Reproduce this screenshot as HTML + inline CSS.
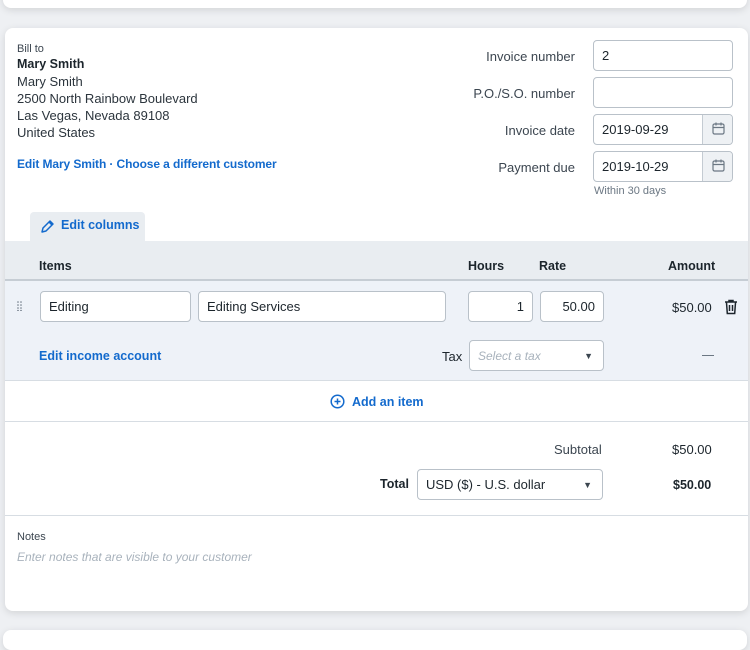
<!DOCTYPE html>
<html><head><style>
*{box-sizing:border-box;margin:0;padding:0}
body{width:750px;height:636px;background:#eef0f3;font-family:"Liberation Sans",sans-serif;color:#1c252c;position:relative;overflow:hidden;font-size:13px}
.a{position:absolute;white-space:nowrap}
.card{position:absolute;background:#fff;border-radius:8px;box-shadow:0 2px 8px rgba(0,0,0,.12)}
.in{position:absolute;border:1px solid #b9c1c9;border-radius:4px;background:#fff;font-size:13px;padding-left:8px;display:flex;align-items:center;color:#1c252c}
.lbl{position:absolute;text-align:right;font-size:13px;color:#3c4650;width:200px}
.blue{color:#136acd;font-weight:bold;font-size:12.5px}
.b{font-weight:bold;font-size:12.5px}
.cal{position:absolute;right:0;top:0;bottom:0;width:30px;background:#eef1f4;border-left:1px solid #c4cbd2;border-radius:0 4px 4px 0}
</style></head><body>
<div class="card" style="left:3px;top:-10px;width:744px;height:18px;border-radius:0 0 8px 8px"></div>
<div class="card" style="left:5px;top:28px;width:743px;height:583px;overflow:hidden">
 <div class="a" style="left:12px;top:15px;font-size:11px;color:#3c4650">Bill to</div>
 <div class="a b" style="left:12px;top:29px">Mary Smith</div>
 <div class="a" style="left:12px;top:45px;line-height:17px;color:#2c353d">Mary Smith<br>2500 North Rainbow Boulevard<br>Las Vegas, Nevada 89108<br>United States</div>
 <div class="a blue" style="left:12px;top:129px;font-size:12px;letter-spacing:-0.1px">Edit Mary Smith · Choose a different customer</div>

 <div class="lbl" style="left:370px;top:21px">Invoice number</div>
 <div class="in" style="left:588px;top:12px;width:140px;height:31px">2</div>
 <div class="lbl" style="left:370px;top:58px">P.O./S.O. number</div>
 <div class="in" style="left:588px;top:49px;width:140px;height:31px"></div>
 <div class="lbl" style="left:370px;top:95px">Invoice date</div>
 <div class="in" style="left:588px;top:86px;width:140px;height:31px">2019-09-29<div class="cal"><svg width="30" height="29" viewBox="0 0 30 29"><rect x="10" y="9" width="11" height="10" rx="1.5" fill="none" stroke="#6b7783" stroke-width="1.2"/><path d="M10 12.5h11M13 7.5v3M18 7.5v3" stroke="#6b7783" stroke-width="1.2"/></svg></div></div>
 <div class="lbl" style="left:370px;top:132px">Payment due</div>
 <div class="in" style="left:588px;top:123px;width:140px;height:31px">2019-10-29<div class="cal"><svg width="30" height="29" viewBox="0 0 30 29"><rect x="10" y="9" width="11" height="10" rx="1.5" fill="none" stroke="#6b7783" stroke-width="1.2"/><path d="M10 12.5h11M13 7.5v3M18 7.5v3" stroke="#6b7783" stroke-width="1.2"/></svg></div></div>
 <div class="a" style="left:589px;top:157px;font-size:11px;color:#6b7783">Within 30 days</div>

 <div class="a" style="left:25px;top:184px;width:115px;height:30px;background:#e9edf1;border-radius:4px 4px 0 0"></div>
 <svg class="a" style="left:35px;top:191px" width="15" height="15" viewBox="0 0 15 15"><path d="M2 13l1-4 7-7 3 3-7 7z M9 3l3 3" fill="none" stroke="#136acd" stroke-width="1.5" stroke-linejoin="round"/></svg>
 <div class="a blue" style="left:56px;top:190px">Edit columns</div>

 <div class="a" style="left:0;top:213px;width:743px;height:40px;background:#e9edf1;border-bottom:2px solid #c6cdd4"></div>
 <div class="a b" style="left:34px;top:231px">Items</div>
 <div class="a b" style="left:463px;top:231px">Hours</div>
 <div class="a b" style="left:534px;top:231px">Rate</div>
 <div class="a b" style="left:663px;top:231px">Amount</div>

 <div class="a" style="left:0;top:253px;width:743px;height:100px;background:#eef2f8;border-bottom:1px solid #d7dde3"></div>
 <svg class="a" style="left:12px;top:273px" width="6" height="10" viewBox="0 0 6 10"><g fill="#6b7783"><circle cx="1" cy="1" r=".8"/><circle cx="4" cy="1" r=".8"/><circle cx="1" cy="4" r=".8"/><circle cx="4" cy="4" r=".8"/><circle cx="1" cy="7" r=".8"/><circle cx="4" cy="7" r=".8"/><circle cx="1" cy="9.5" r=".8"/><circle cx="4" cy="9.5" r=".8"/></g></svg>
 <div class="in" style="left:35px;top:263px;width:151px;height:31px">Editing</div>
 <div class="in" style="left:193px;top:263px;width:248px;height:31px">Editing Services</div>
 <div class="in" style="left:463px;top:263px;width:65px;height:31px;justify-content:flex-end;padding-right:8px">1</div>
 <div class="in" style="left:535px;top:263px;width:64px;height:31px;justify-content:flex-end;padding-right:8px">50.00</div>
 <div class="a" style="left:667px;top:272px">$50.00</div>
 <svg class="a" style="left:719px;top:271px" width="14" height="16" viewBox="0 0 14 16"><path d="M1 3h12M5 3V1.5h4V3M2.5 3.5l.8 11h7.4l.8-11M5.5 6v6M8.5 6v6" fill="none" stroke="#1c252c" stroke-width="1.5"/></svg>
 <div class="a blue" style="left:34px;top:321px">Edit income account</div>
 <div class="a" style="left:437px;top:321px">Tax</div>
 <div class="in" style="left:464px;top:312px;width:135px;height:31px;color:#a8b2bc;font-style:italic;font-size:12px">Select a tax<span style="position:absolute;right:10px;color:#3c4650;font-size:9px;font-style:normal">▼</span></div>
 <div class="a" style="left:697px;top:327px;width:12px;height:1px;background:#6b7783"></div>

 <svg class="a" style="left:325px;top:366px" width="15" height="15" viewBox="0 0 15 15"><circle cx="7.5" cy="7.5" r="6.3" fill="none" stroke="#136acd" stroke-width="1.5"/><path d="M7.5 4.5v6M4.5 7.5h6" stroke="#136acd" stroke-width="1.5"/></svg>
 <div class="a blue" style="left:347px;top:367px">Add an item</div>
 <div class="a" style="left:0;top:393px;width:743px;height:1px;background:#d7dde3"></div>

 <div class="a" style="left:549px;top:414px;color:#3c4650">Subtotal</div>
 <div class="a" style="left:667px;top:414px">$50.00</div>
 <div class="a b" style="left:375px;top:449px">Total</div>
 <div class="in" style="left:412px;top:441px;width:186px;height:31px">USD ($) - U.S. dollar<span style="position:absolute;right:10px;color:#3c4650;font-size:9px">▼</span></div>
 <div class="a b" style="left:668px;top:450px">$50.00</div>
 <div class="a" style="left:0;top:487px;width:743px;height:1px;background:#d7dde3"></div>
 <div class="a" style="left:12px;top:503px;font-size:11px;color:#3c4650">Notes</div>
 <div class="a" style="left:12px;top:522px;font-size:12px;font-style:italic;color:#a8b2bc">Enter notes that are visible to your customer</div>
</div>
<div class="card" style="left:3px;top:630px;width:744px;height:20px"></div>
</body></html>
